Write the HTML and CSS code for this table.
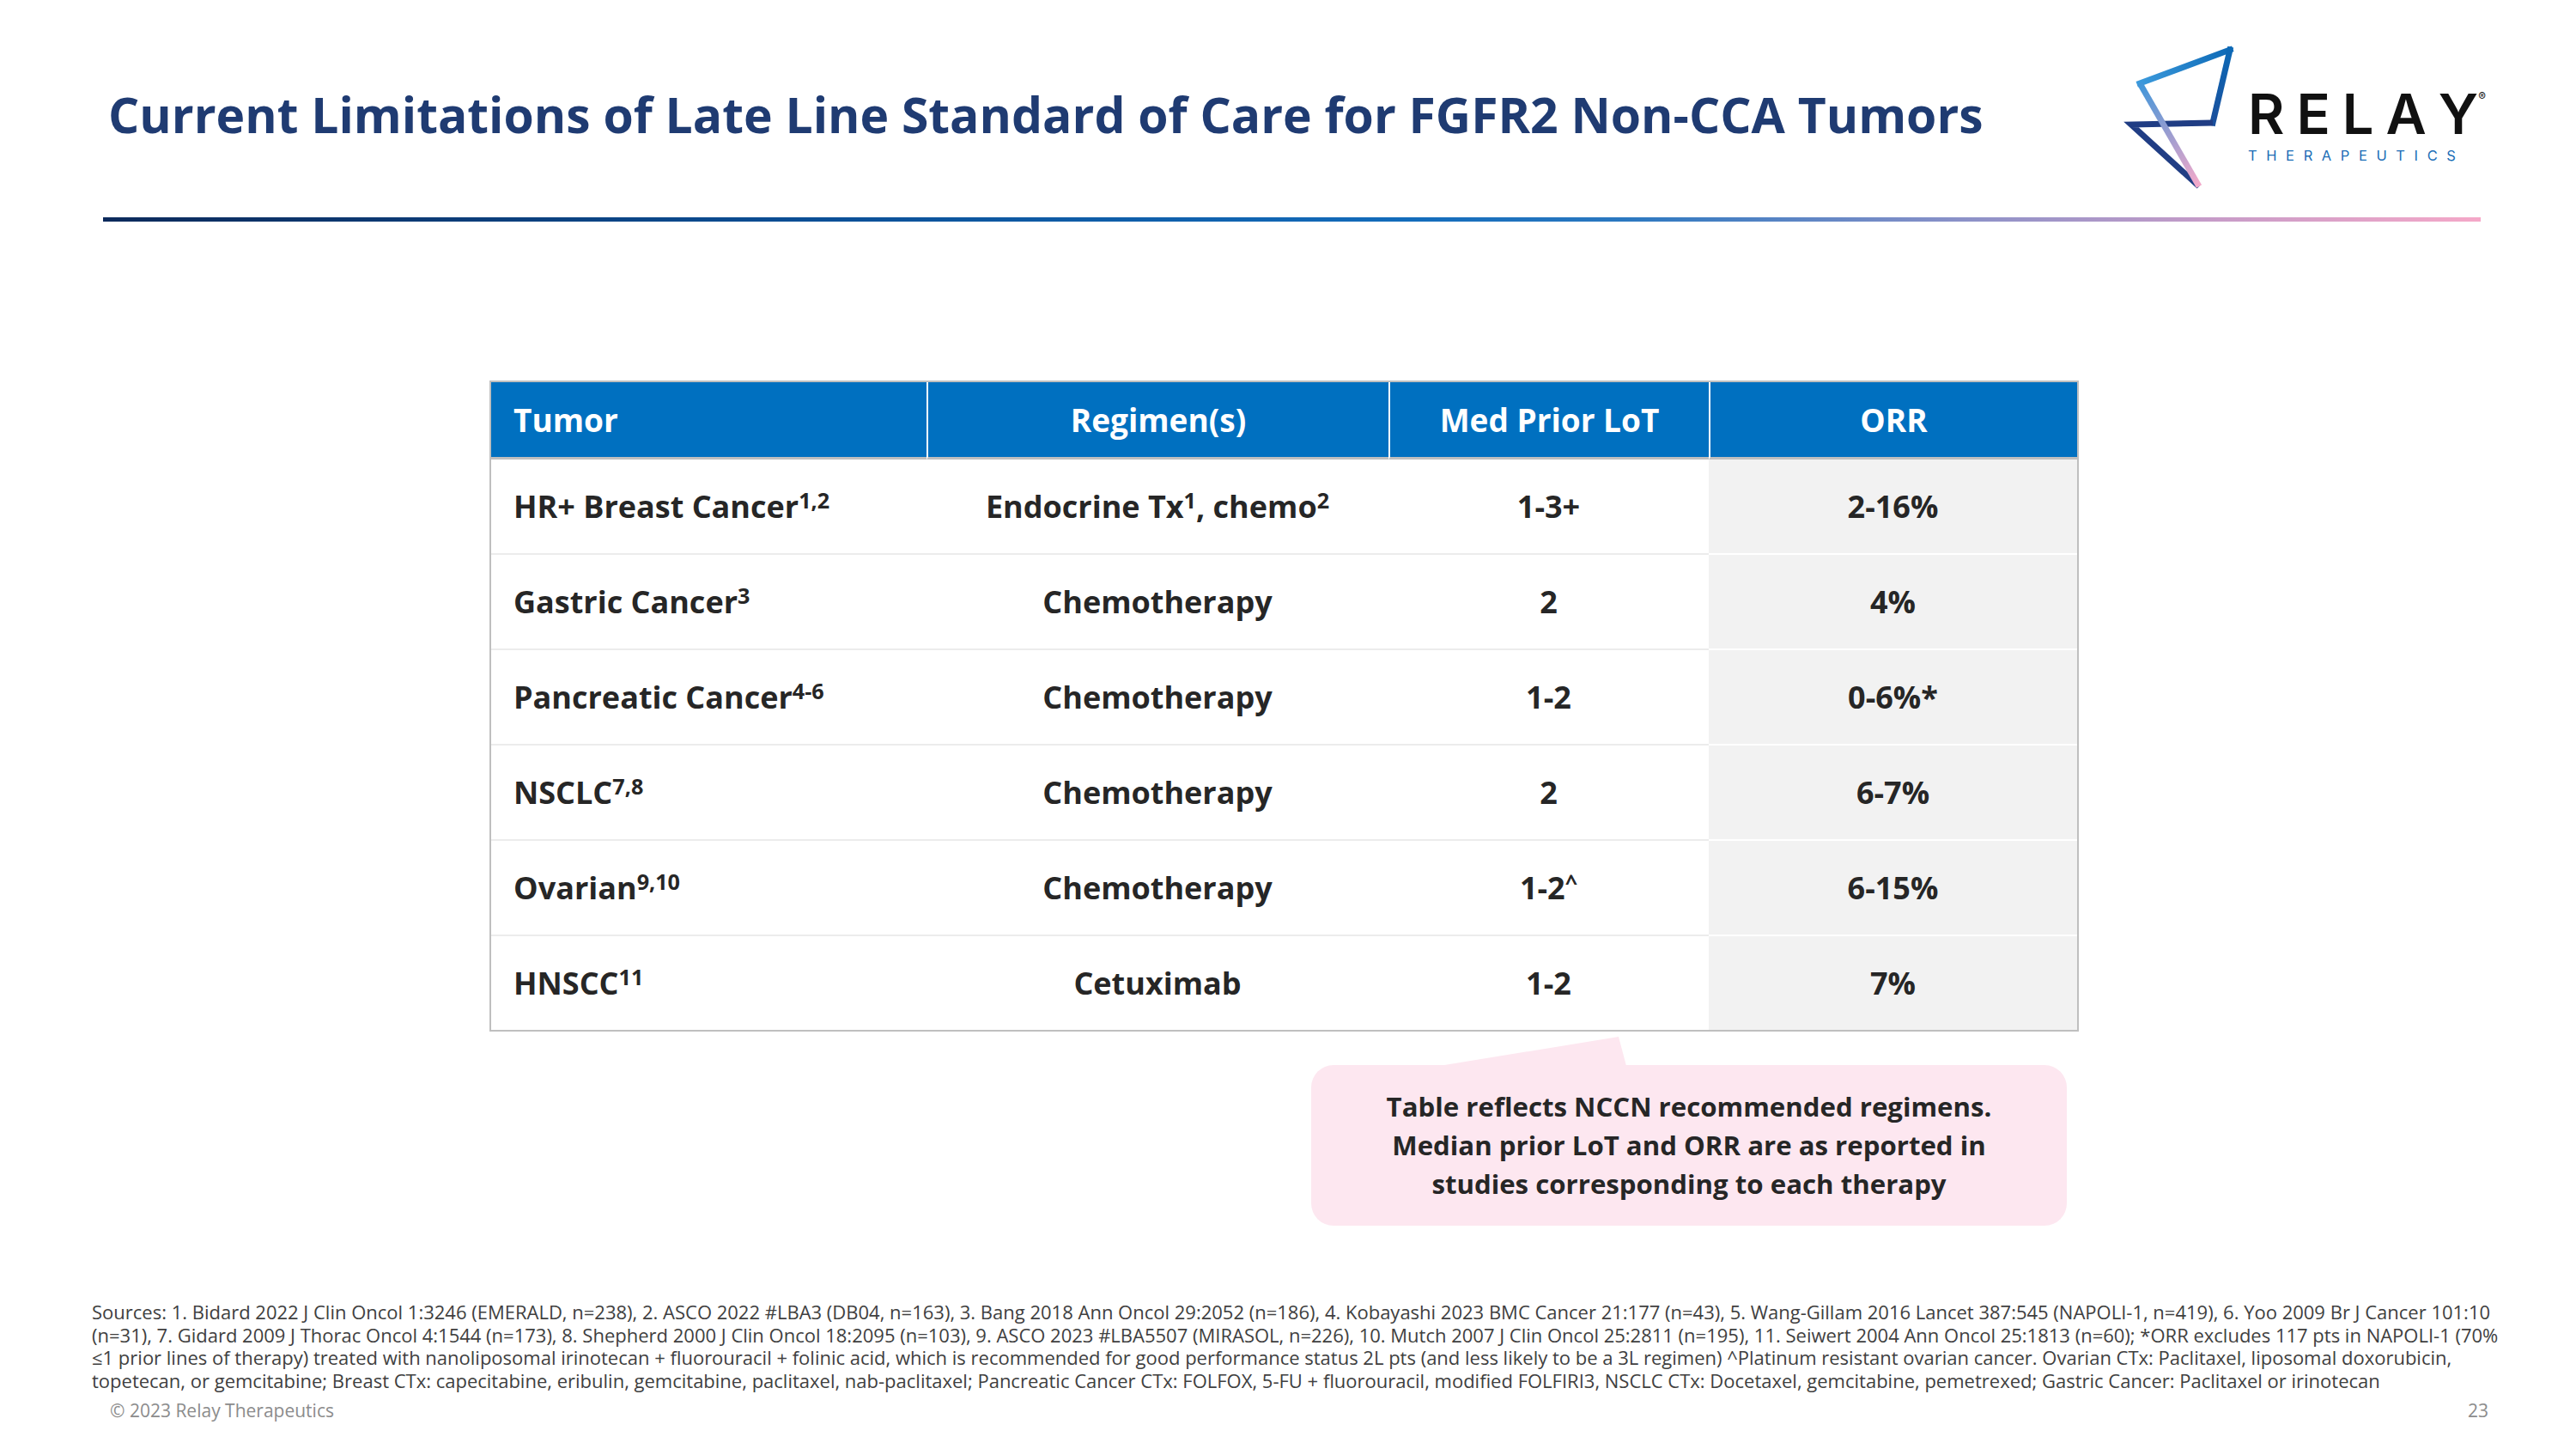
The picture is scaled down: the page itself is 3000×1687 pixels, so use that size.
FILE: index.html
```html
<!DOCTYPE html>
<html lang="en">
<head>
<meta charset="utf-8">
<title>Current Limitations of Late Line Standard of Care for FGFR2 Non-CCA Tumors</title>
<link rel="stylesheet" href="styles.css">
</head>
<body>
<header class="top">
  <h1 class="title">Current Limitations of Late Line Standard of Care for FGFR2 Non-CCA Tumors</h1>
  <div class="logo">
    <svg class="mark" width="136" height="172" viewBox="0 0 136 172" aria-hidden="true">
      <defs>
        <linearGradient id="gTop" gradientUnits="userSpaceOnUse" x1="24" y1="45" x2="129" y2="6">
          <stop offset="0" stop-color="#3b9adc"/>
          <stop offset="1" stop-color="#0d69b6"/>
        </linearGradient>
        <linearGradient id="gRight" gradientUnits="userSpaceOnUse" x1="129" y1="6" x2="109" y2="91">
          <stop offset="0" stop-color="#0d69b6"/>
          <stop offset="1" stop-color="#1a4f9c"/>
        </linearGradient>
        <linearGradient id="gDiag" gradientUnits="userSpaceOnUse" x1="24" y1="45" x2="93" y2="165">
          <stop offset="0" stop-color="#3f96d9"/>
          <stop offset="0.5" stop-color="#9c9dd0"/>
          <stop offset="1" stop-color="#f6aaca"/>
        </linearGradient>
      </defs>
      <path d="M24 45 L129 6" stroke="url(#gTop)" stroke-width="7" fill="none" stroke-linecap="square"/>
      <path d="M129 6 L109 91" stroke="url(#gRight)" stroke-width="7" fill="none" stroke-linecap="square"/>
      <path d="M109 91 L14 93 L93 165" stroke="#203d84" stroke-width="7" fill="none" stroke-linejoin="miter" stroke-linecap="butt"/>
      <path d="M24 45 L93 165" stroke="url(#gDiag)" stroke-width="7" fill="none"/>
    </svg>
    <div class="word">
      <div class="relay">RELA<span class="last">Y</span><span class="reg">®</span></div>
      <div class="thera">THERAPEUTICS</div>
    </div>
  </div>
</header>
<div class="rule"></div>

<table class="data">
  <colgroup>
    <col class="c1"><col class="c2"><col class="c3"><col class="c4">
  </colgroup>
  <thead>
    <tr><th class="tumor">Tumor</th><th>Regimen(s)</th><th>Med Prior LoT</th><th>ORR</th></tr>
  </thead>
  <tbody>
    <tr><td class="tumor">HR+ Breast Cancer<sup>1,2</sup></td><td>Endocrine Tx<sup>1</sup>, chemo<sup>2</sup></td><td>1-3+</td><td class="orr">2-16%</td></tr>
    <tr><td class="tumor">Gastric Cancer<sup>3</sup></td><td>Chemotherapy</td><td>2</td><td class="orr">4%</td></tr>
    <tr><td class="tumor">Pancreatic Cancer<sup>4-6</sup></td><td>Chemotherapy</td><td>1-2</td><td class="orr">0-6%*</td></tr>
    <tr><td class="tumor">NSCLC<sup>7,8</sup></td><td>Chemotherapy</td><td>2</td><td class="orr">6-7%</td></tr>
    <tr><td class="tumor">Ovarian<sup>9,10</sup></td><td>Chemotherapy</td><td>1-2<sup>^</sup></td><td class="orr">6-15%</td></tr>
    <tr><td class="tumor">HNSCC<sup>11</sup></td><td>Cetuximab</td><td>1-2</td><td class="orr">7%</td></tr>
  </tbody>
</table>

<div class="note">
  <svg class="note-tail" width="218" height="34" viewBox="0 0 218 34" aria-hidden="true"><polygon points="0,34 209,0 218,34" fill="#fde7f0"/></svg>
  <p class="note-text">Table reflects NCCN recommended regimens.<br>Median prior LoT and ORR are as reported in<br>studies corresponding to each therapy</p>
</div>

<div class="sources">
  <span class="line">Sources: 1. Bidard 2022 J Clin Oncol 1:3246 (EMERALD, n=238), 2. ASCO 2022 #LBA3 (DB04, n=163), 3. Bang 2018 Ann Oncol 29:2052 (n=186), 4. Kobayashi 2023 BMC Cancer 21:177 (n=43), 5. Wang-Gillam 2016 Lancet 387:545 (NAPOLI-1, n=419), 6. Yoo 2009 Br J Cancer 101:10</span>
  <span class="line">(n=31), 7. Gidard 2009 J Thorac Oncol 4:1544 (n=173), 8. Shepherd 2000 J Clin Oncol 18:2095 (n=103), 9. ASCO 2023 #LBA5507 (MIRASOL, n=226), 10. Mutch 2007 J Clin Oncol 25:2811 (n=195), 11. Seiwert 2004 Ann Oncol 25:1813 (n=60); *ORR excludes 117 pts in NAPOLI-1 (70%</span>
  <span class="line">≤1 prior lines of therapy) treated with nanoliposomal irinotecan + fluorouracil + folinic acid, which is recommended for good performance status 2L pts (and less likely to be a 3L regimen) ^Platinum resistant ovarian cancer. Ovarian CTx: Paclitaxel, liposomal doxorubicin,</span>
  <span class="line">topetecan, or gemcitabine; Breast CTx: capecitabine, eribulin, gemcitabine, paclitaxel, nab-paclitaxel; Pancreatic Cancer CTx: FOLFOX, 5-FU + fluorouracil, modified FOLFIRI3, NSCLC CTx: Docetaxel, gemcitabine, pemetrexed; Gastric Cancer: Paclitaxel or irinotecan</span>
</div>

<footer class="foot">
  <span>© 2023 Relay Therapeutics</span>
  <span>23</span>
</footer>
</body>
</html>
```

FILE: styles.css
```css
html, body {
  margin: 0;
  padding: 0;
}

body {
  width: 3000px;
  height: 1687px;
  overflow: hidden;
  background: #ffffff;
  font-family: "Open Sans", "Noto Sans", sans-serif;
  color: #262626;
}

/* ---------- header ---------- */
.top {
  display: flex;
  align-items: flex-start;
  height: 253px;
  padding-left: 126px;
  padding-right: 100px;
  box-sizing: border-box;
}

.title {
  flex: 1;
  margin: 99px 0 0;
  font-size: 57px;
  font-weight: 700;
  line-height: 1.2;
  color: #1f3b72;
  white-space: nowrap;
}

.logo {
  display: flex;
  align-items: flex-start;
  width: 432px;
  margin-top: 52px;
}

.mark {
  display: block;
  flex: none;
}

.word {
  margin-left: 14px;
  margin-top: 48px;
}

.relay {
  font-family: "Inter", "Open Sans", sans-serif;
  font-size: 65px;
  font-weight: 600;
  line-height: 1;
  letter-spacing: 14px;
  color: #111111;
  white-space: nowrap;
}

.relay .last {
  letter-spacing: 0;
}

.reg {
  display: inline-block;
  vertical-align: top;
  margin-left: 0;
  margin-top: 6px;
  font-size: 13px;
  font-weight: 400;
  letter-spacing: 0;
  line-height: 1;
}

.thera {
  margin-top: 8px;
  font-family: "Inter", "Open Sans", sans-serif;
  font-size: 16.5px;
  font-weight: 400;
  line-height: 1;
  letter-spacing: 10.6px;
  color: #1b6db6;
  white-space: nowrap;
}

.rule {
  height: 5px;
  width: 2769px;
  margin-left: 120px;
  background: linear-gradient(90deg, #0c2a5b 0%, #0b4f96 30%, #136cbb 55%, #2b78c0 64%, #8a91c8 78%, #c89cc8 89%, #f5a8c8 100%);
}

/* ---------- table ---------- */
.data {
  margin: 185px 0 0 570px;
  border-collapse: separate;
  border-spacing: 0;
  border: 2px solid #bfbfbf;
  table-layout: fixed;
  width: 1851px;
}

.c1 { width: 507px; }
.c2 { width: 538px; }
.c3 { width: 373px; }
.c4 { width: 429px; }

.data th {
  height: 90px;
  box-sizing: border-box;
  padding: 0 20px;
  background: #0070c0;
  color: #ffffff;
  font-size: 37px;
  font-weight: 700;
  text-align: center;
  vertical-align: middle;
  border-bottom: 3px solid #bfbfbf;
  white-space: nowrap;
}

.data th + th {
  border-left: 2px solid #ffffff;
}

.data td {
  height: 111px;
  box-sizing: border-box;
  padding: 0 20px;
  font-size: 36px;
  font-weight: 700;
  color: #262626;
  text-align: center;
  vertical-align: middle;
  border-bottom: 2px solid #ececec;
  white-space: nowrap;
}

.data tbody tr:last-child td {
  height: 109px;
  border-bottom: 0;
}

.data .tumor {
  text-align: left;
  padding-left: 26px;
}

.data td.orr {
  background: #f2f2f2;
  border-bottom-color: #ffffff;
}

.data sup {
  font-size: 0.7em;
  line-height: 0;
  vertical-align: 0.45em;
}

/* ---------- callout ---------- */
.note {
  position: relative;
  width: 880px;
  height: 187px;
  margin: 39px 0 0 1527px;
  box-sizing: border-box;
  background: #fde7f0;
  border-radius: 26px;
  display: flex;
  align-items: center;
  justify-content: center;
}

.note-tail {
  position: absolute;
  left: 149px;
  top: -33px;
  display: block;
}

.note-text {
  margin: 0;
  font-size: 31.2px;
  font-weight: 700;
  line-height: 45px;
  text-align: center;
  color: #262626;
}

/* ---------- sources / footer ---------- */
.sources {
  margin: 87px 0 0 107px;
  font-size: 22px;
  line-height: 26.5px;
  color: #404040;
  white-space: nowrap;
}

.sources .line {
  display: block;
}

.foot {
  display: flex;
  justify-content: space-between;
  width: 2770px;
  margin: 10px 0 0 128px;
  font-size: 21px;
  line-height: 1.2;
  color: #8c8c8c;
}
```
